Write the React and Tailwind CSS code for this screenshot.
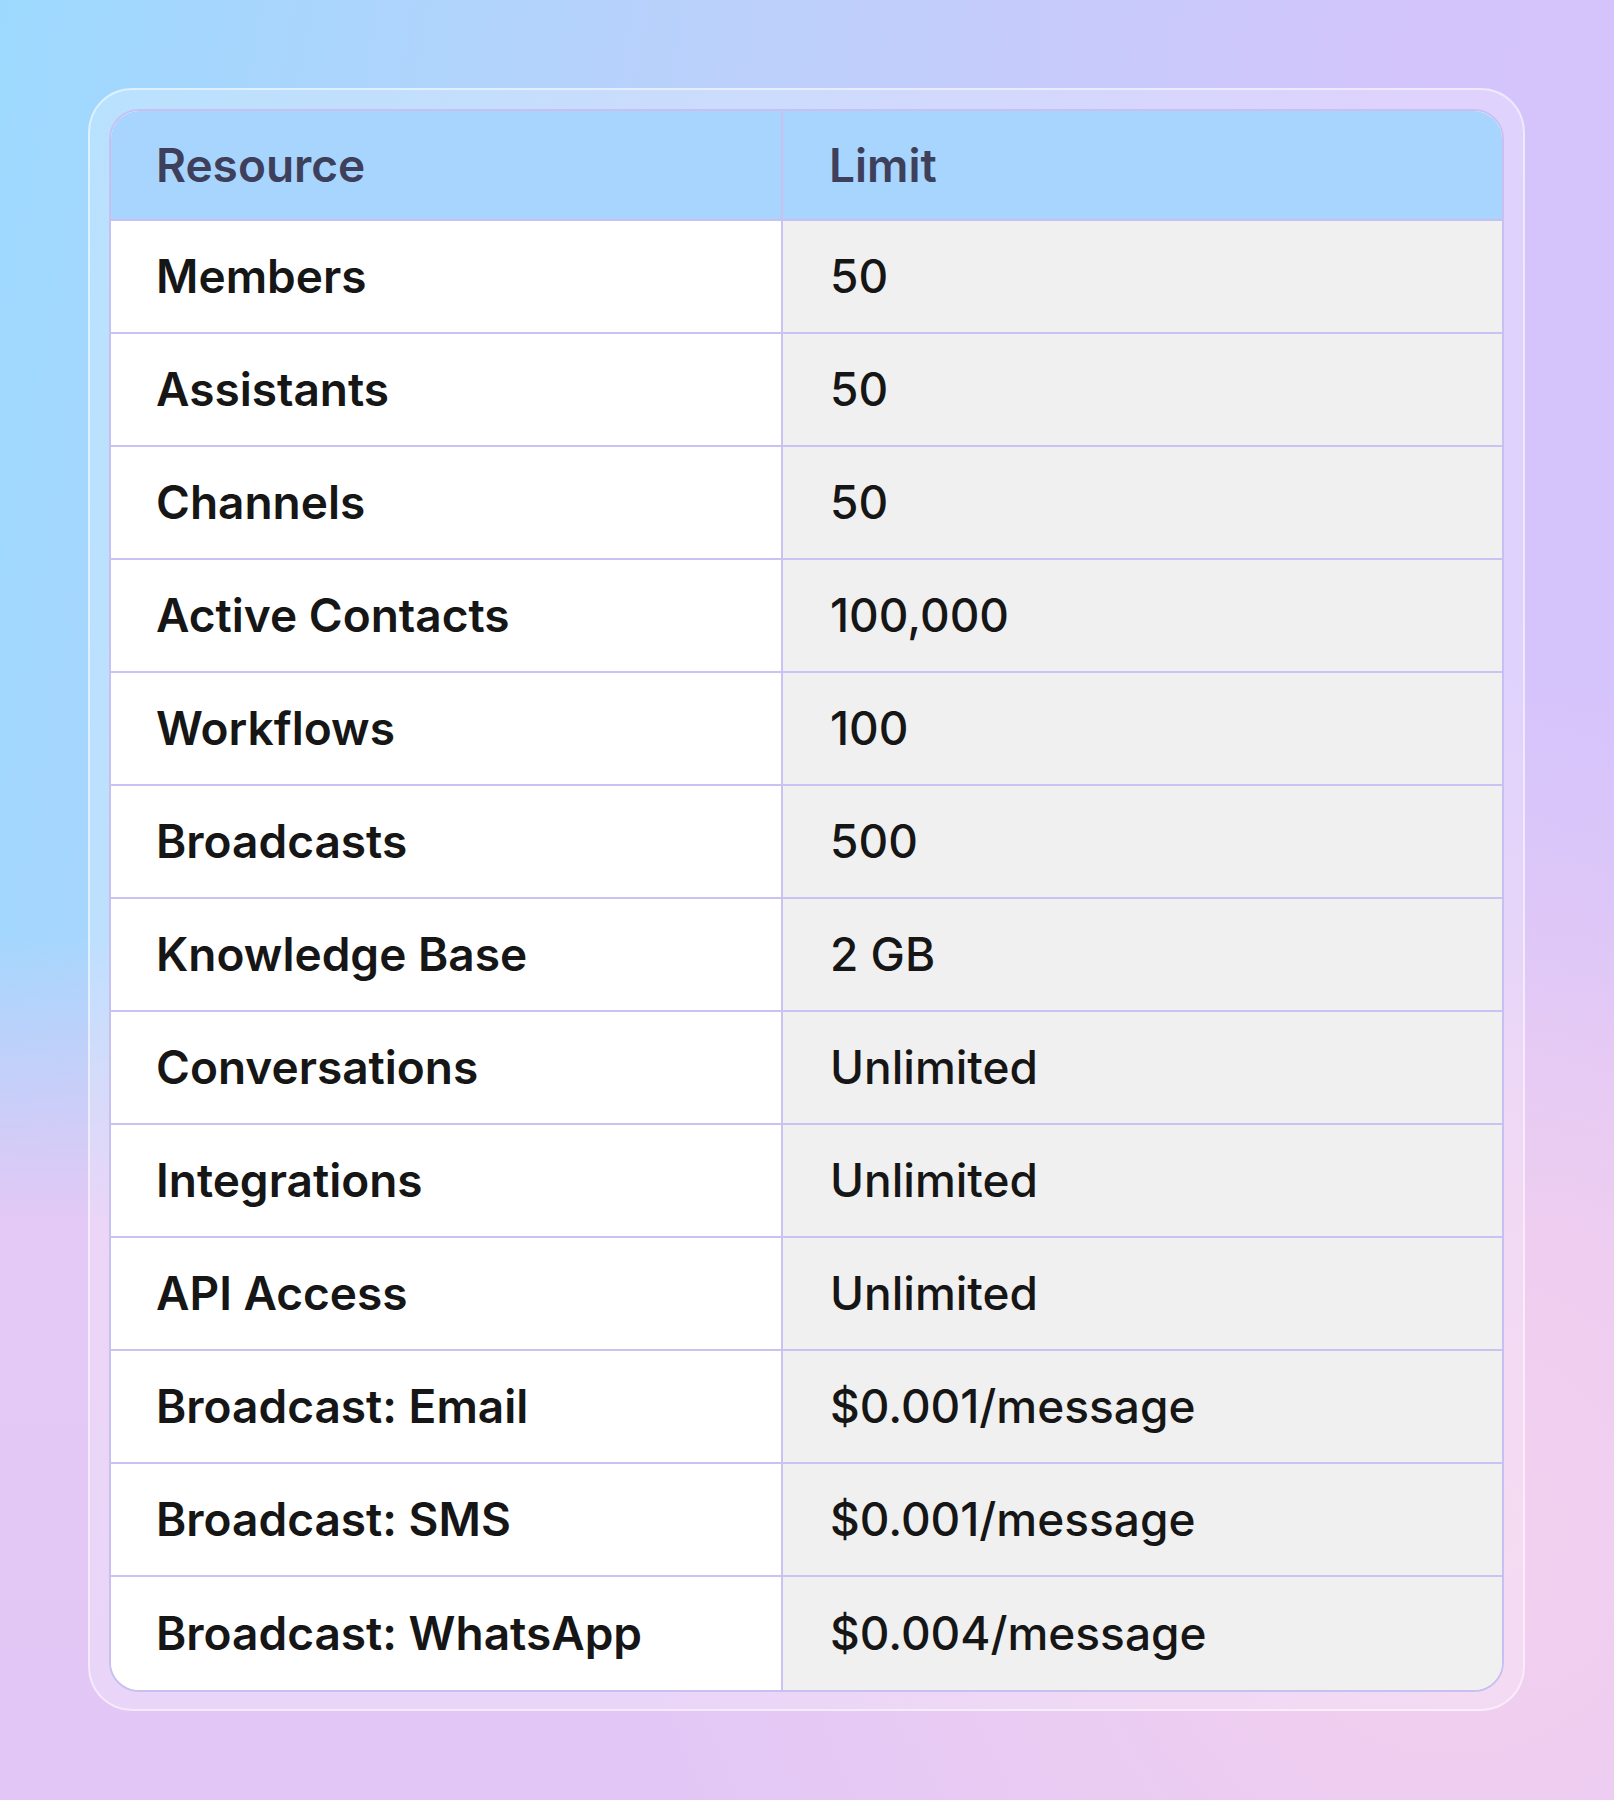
const rows = [
  ["Members", "50"],
  ["Assistants", "50"],
  ["Channels", "50"],
  ["Active Contacts", "100,000"],
  ["Workflows", "100"],
  ["Broadcasts", "500"],
  ["Knowledge Base", "2 GB"],
  ["Conversations", "Unlimited"],
  ["Integrations", "Unlimited"],
  ["API Access", "Unlimited"],
  ["Broadcast: Email", "$0.001/message"],
  ["Broadcast: SMS", "$0.001/message"],
  ["Broadcast: WhatsApp", "$0.004/message"],
];

export default function App() {
  return (
    <div
      className="w-[1614px] h-[1800px] relative overflow-hidden bg-[linear-gradient(100deg,#9dd9fe_0%,#bcd0fb_40%,#d4c4fc_75%,#d6c3fb_100%)]"
      style={{ fontFamily: "Inter, 'Noto Sans', sans-serif" }}
    >
      <div className="absolute inset-0 bg-[linear-gradient(180deg,transparent_0%,transparent_52%,#e4c8f5_68%,#e2c7f6_100%)]" />
      <div className="absolute inset-0 bg-[radial-gradient(ellipse_at_90%_85%,#f3d0ee_0%,transparent_40%)]" />
      <div className="relative pt-[88px] pl-[88px]">
        <div className="w-[1437px] h-[1623px] rounded-[44px] bg-white/25 border-2 border-white/50 p-[19px]">
          <div className="rounded-[30px] overflow-hidden border-2 border-[#c7c0f1] bg-white">
            <div className="grid grid-cols-[672px_1fr] h-[110px] bg-[#a8d5fd] border-b-2 border-[#c7c0f1]">
              <div className="flex items-center pl-[45px] border-r-2 border-[#c9c2ef] text-[46px] font-semibold text-[#3e3f5b]">Resource</div>
              <div className="flex items-center pl-[46px] text-[46px] font-semibold text-[#3e3f5b]">Limit</div>
            </div>
            {rows.map(([a, b], i) => (
              <div key={a} className={`grid grid-cols-[672px_1fr] h-[113px] ${i < rows.length - 1 ? "border-b-2 border-[#c9c2f3]" : ""}`}>
                <div className="flex items-center pl-[45px] border-r-2 border-[#c9c2f3] bg-white text-[46px] font-semibold text-[#161616]">{a}</div>
                <div className="flex items-center pl-[47px] bg-[#f0f0f0] text-[46px] font-medium text-[#161616]">{b}</div>
              </div>
            ))}
          </div>
        </div>
      </div>
    </div>
  );
}
